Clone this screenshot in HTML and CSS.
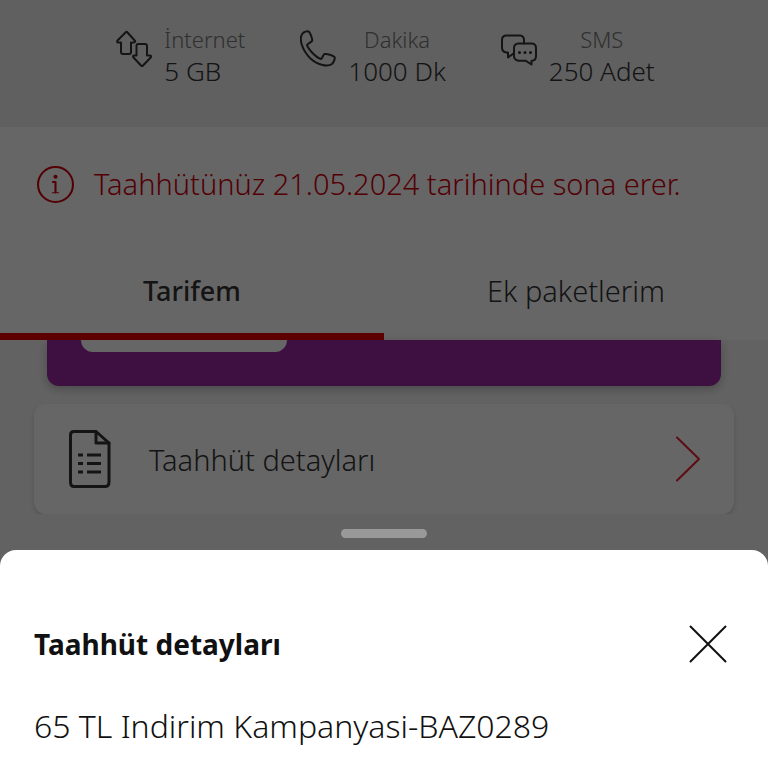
FILE: index.html
```
<!DOCTYPE html>
<html lang="tr">
  <head>
    <meta charset="utf-8">
    <meta name="viewport" content="width=device-width, initial-scale=1">
    <title>Tarifem</title>
    <link rel="stylesheet" href="styles.css">
  </head>
  <body>
    <main>
      <section class="usage">
        <div class="usage-item">
          <svg class="usage-icon" viewBox="0 0 36 38">
            <path d="M10 2 L1.5 10.5 Q0.5 12 2 12.5 H5 V22 Q5 24 7 24 H13 Q15 24 15 22 V12.5 H18 Q20 12 18.7 10.5 L11.5 2.5 Q10.8 1.5 10 2Z"/>
            <path d="M22 14 H29 Q31 14 31 16 V25.500 H34 Q36 26 34.700 27.500 L27 35.500 Q26 36.500 25 35.500 L17.500 27.500 Q16.300 26 18 25.500 H20.500 V16 Q20.500 14 22 14Z"/>
          </svg>
          <div class="usage-text left">
            <span class="label">İnternet</span>
            <span class="value">5 GB</span>
          </div>
        </div>
        <div class="usage-item">
          <svg class="usage-icon" viewBox="0 0 36 38">
            <path d="M2.500 3.500 C4 2 7 1 8.500 1.500 C10 2 12.500 9 12.200 10.500 C12 12 7.500 13.500 7 15 C8 19 16 27.500 21 29 C22.500 28.500 23 24.500 24.500 24 C27 23.500 33 25.500 34.500 27 C35.500 28.500 33.500 32.500 32 34 C28 37 18 35.500 10.500 28.500 C2 20 -1.500 8.500 2.500 3.500Z"/>
          </svg>
          <div class="usage-text">
            <span class="label">Dakika</span>
            <span class="value">1000 Dk</span>
          </div>
        </div>
        <div class="usage-item">
          <svg class="usage-icon" viewBox="0 0 36 38">
            <path d="M12.500 23.500 L7 27.500 V22.500 H5.500 Q1 22 1 17.500 V10 Q1 5.500 5.500 5.500 H19 Q23 6 23 10 V13.500"/>
            <path d="M17.500 13.500 H31 Q35 14 35 18 V26 Q35 30.500 31 30.700 H30.500 V34.500 L24.500 30.700 H17.500 Q13 30 13 26 V18 Q13 14 17.500 13.500Z"/>
            <path class="dots" d="M18.500 22.500h.01M24 22.500h.01M29.500 22.500h.01"/>
          </svg>
          <div class="usage-text">
            <span class="label">SMS</span>
            <span class="value">250 Adet</span>
          </div>
        </div>
      </section>

      <section class="notice">
        <svg class="notice-icon" viewBox="0 0 36 36">
          <circle cx="18" cy="18" r="17"/>
          <path d="M15.500 15.500h2.500v10"/>
          <path class="foot" d="M15 26h6"/>
          <circle class="dot" cx="18" cy="10.500" r="2"/>
        </svg>
        <p>Taahhütünüz 21.05.2024 tarihinde sona erer.</p>
      </section>

      <nav class="tabs">
        <a class="tab active" href="#tarifem">Tarifem</a>
        <a class="tab" href="#ek-paketlerim">Ek paketlerim</a>
      </nav>

      <div class="content" id="tarifem">
        <div class="banner"><div class="banner-box"></div></div>
        <a class="row" href="#taahhut">
          <svg class="row-icon" viewBox="0 0 42 58">
            <path d="M5 1.500H27L40 13V52Q40 56.500 36 56.500H5Q1.500 56.500 1.500 52V5Q1.500 1.500 5 1.500Z"/>
            <path d="M27 1.500V13H40"/>
            <path class="lines" d="M9 25h5M18 25h14M9 33.500h5M18 33.500h14M9 42h5M18 42h14"/>
          </svg>
          <span class="row-title">Taahhüt detayları</span>
          <svg class="row-arrow" viewBox="0 0 26 46"><path d="M2 1.500L24 23L2 44.500"/></svg>
        </a>
      </div>
    </main>

    <div class="overlay"></div>

    <div class="modal" role="dialog" aria-labelledby="sheetTitle">
      <div class="handle"></div>
      <div class="sheet" id="taahhut">
        <div class="sheet-head">
          <h2 id="sheetTitle">Taahhüt detayları</h2>
          <button class="close" type="button" aria-label="Kapat">
            <svg viewBox="0 0 38 38"><path d="M1.500 1.500L36.500 36.500M36.500 1.500L1.500 36.500"/></svg>
          </button>
        </div>
        <p>65 TL Indirim Kampanyasi-BAZ0289</p>
      </div>
    </div>
  </body>
</html>
```
FILE: styles.css
```
*{
  box-sizing: border-box;
}
body{
  margin: 0;
  background-color: #f5f5f5;
  font-family: "Noto Sans", "Open Sans", sans-serif;
  font-weight: 300;
  color: #333;
}
p, h2{
  margin: 0;
}
a{
  color: inherit;
  text-decoration: none;
}
svg{
  display: block;
  flex: none;
  fill: none;
  stroke: #333;
  stroke-width: 2;
  stroke-linecap: round;
  stroke-linejoin: round;
}

/* kalan kullanım */
.usage{
  display: flex;
  justify-content: center;
  gap: 55px;
  padding: 23px 0 40px 3px;
  background-color: #f0f0f0;
}
.usage-item{
  display: flex;
  gap: 12px;
}
.usage-icon{
  width: 36px;
  height: 38px;
  margin-top: 7px;
}
.usage-icon .dots{
  stroke-width: 3;
}
.usage-text{
  display: flex;
  flex-direction: column;
  text-align: center;
  line-height: 32px;
}
.usage-text.left{
  text-align: left;
}
.label{
  font-size: 22px;
  color: #777;
}
.value{
  font-size: 26px;
}

.notice{
  display: flex;
  align-items: center;
  gap: 20px;
  padding: 36px 37px;
  background-color: #fff;
  color: #d0000e;
  font-size: 29px;
  line-height: 42px;
}
.notice-icon{
  width: 37px;
  height: 37px;
  stroke: #d0000e;
}
.notice-icon .foot{
  stroke-width: 1;
}
.notice-icon .dot{
  fill: #d0000e;
  stroke: none;
}

.tabs{
  display: flex;
  background-color: #fff;
}
.tab{
  flex: 1;
  padding: 29px 0 21px;
  border-bottom: 7px solid transparent;
  text-align: center;
  font-size: 29px;
  line-height: 42px;
}
.tab.active{
  border-color: #e60000;
  font-size: 27px;
  font-weight: 500;
}

.content{
  padding: 0 34px;
}
.banner{
  margin: 0 13px 18px;
  padding: 0 34px 34px;
  border-radius: 0 0 12px 12px;
  background-color: #9c2aa2;
  box-shadow: 0 3px 10px rgba(0, 0, 0, .25);
}
.banner-box{
  width: 34%;
  height: 12px;
  border-radius: 0 0 12px 12px;
  background-color: #fff;
}
.row{
  display: flex;
  align-items: center;
  padding: 26px 33px 26px 35px;
  border-radius: 12px;
  background-color: #fff;
  box-shadow: 0 3px 5px rgba(0, 0, 0, .15);
}
.row-icon{
  width: 42px;
  height: 58px;
  stroke-width: 3;
}
.row-icon .lines{
  stroke-linecap: butt;
}
.row-title{
  flex: 1;
  margin-left: 38px;
  font-size: 29px;
}
.row-arrow{
  width: 26px;
  height: 46px;
  stroke: #e6202e;
}

.overlay{
  position: fixed;
  inset: 0;
  background-color: rgba(0, 0, 0, .6);
}

/* alttan açılan pencere */
.modal{
  position: fixed;
  left: 0;
  right: 0;
  bottom: 0;
}
.handle{
  width: 86px;
  height: 9px;
  margin: 0 auto 12px;
  border-radius: 5px;
  background-color: #999;
}
.sheet{
  padding: 72px 34px 18px;
  border-radius: 16px 16px 0 0;
  background-color: #fff;
  color: #111;
}
.sheet-head{
  display: flex;
  align-items: center;
  justify-content: space-between;
  margin-bottom: 36px;
}
.sheet-head h2{
  font-size: 28px;
  font-weight: 700;
  line-height: 44px;
}
.sheet p{
  font-size: 32px;
  line-height: 48px;
}
.close{
  margin-right: 7px;
  padding: 0;
  border: 0;
  background: none;
}
.close svg{
  width: 38px;
  height: 38px;
  stroke: #111;
}
```
